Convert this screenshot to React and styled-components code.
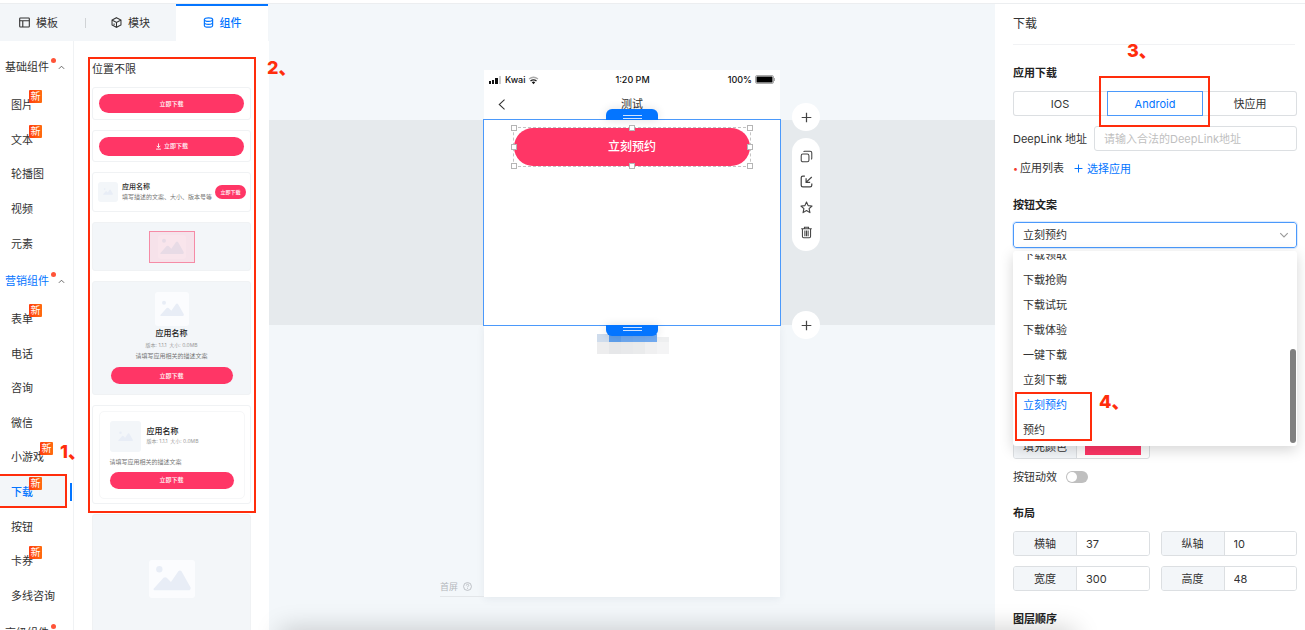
import React from "react";
import styled, { createGlobalStyle, css } from "styled-components";

const blue = "#0475ff";
const pink = "#ff3666";
const red = "#ff2d0c";
const mist = "#f3f6f9";

const Global = createGlobalStyle`
  *, *::before, *::after { box-sizing: border-box; }
  body {
    margin: 0;
    background: #fff;
    color: #333;
    font: 11px/16px Inter, "Noto Sans CJK SC", sans-serif;
  }
  button, input, select { font: inherit; color: inherit; margin: 0; }
  button { padding: 0; border: 0; background: none; }
  ul { list-style: none; margin: 0; padding: 0; }
  h2, h3 { margin: 0; font-size: 11px; line-height: 16px; }
`;

const Page = styled.div`
  display: grid;
  grid-template-columns: 269px minmax(0, 1fr) 310px;
  height: 100vh;
  min-height: 600px;
  padding-top: 4px;
  overflow: hidden;
  position: relative;
  &::before {
    content: "";
    position: absolute;
    inset: 3px 0 auto;
    height: 1px;
    background: #eceef0;
  }
`;

/* Soft shadow rising from below the fold */
const BottomShadow = styled.div`
  position: absolute;
  z-index: 3;
  top: 100%;
  left: 280px;
  right: 230px;
  height: 20px;
  box-shadow: 0 0 26px rgba(0, 0, 0, 0.22);
  pointer-events: none;
`;

/* Callouts */
const Callout = styled.div`
  position: absolute;
  z-index: 5;
  border: 2px solid ${red};
  pointer-events: none;
`;
const CalloutNumber = styled.span`
  position: absolute;
  color: ${red};
  font-size: 18px;
  line-height: 20px;
  font-weight: 800;
  white-space: nowrap;
`;
const NavCallout = styled(Callout)`
  inset: 0 6px 0 -2px;
  ${CalloutNumber} { left: 60px; top: -34px; }
`;
const CardsCallout = styled(Callout)`
  inset: 16px 13px auto 14px;
  height: 456px;
  ${CalloutNumber} { left: 177px; top: -1px; }
`;
const TabCallout = styled(Callout)`
  inset: -16px -8px -12px -9px;
  ${CalloutNumber} { left: 26px; top: -37px; }
`;
const OptionCallout = styled(Callout)`
  left: 2px;
  bottom: 5px;
  width: 77px;
  height: 49px;
  ${CalloutNumber} { left: 82px; top: -2px; }
`;

/* Left panel */
const Left = styled.aside`
  display: flex;
  flex-direction: column;
  min-height: 0;
  position: relative;
  z-index: 2;
`;
const Tabs = styled.div`
  display: grid;
  grid-template-columns: 77px 99px 92px;
  height: 37px;
  flex: none;
  background: ${mist};
`;
const Tab = styled.button`
  display: flex;
  align-items: center;
  justify-content: center;
  gap: 6px;
  position: relative;
  padding: 0 0 2px ${(p) => (p.$divided ? 8 : 0)}px;
  border-top: 2px solid transparent;
  svg { width: 11px; height: 11px; }
  ${(p) => p.$divided && css`
    &::before {
      content: "";
      position: absolute;
      left: 8px;
      top: 12px;
      height: 10px;
      border-left: 1px solid #d0d3d6;
    }
  `}
  ${(p) => p.$active && css`
    color: ${blue};
    font-weight: 500;
    background: #fff;
    border-color: ${blue};
  `}
`;
const LeftBody = styled.div`
  display: grid;
  grid-template-columns: 74px minmax(0, 1fr);
  flex: 1;
  min-height: 0;
  background: #fff;
`;
const Nav = styled.nav`
  border-right: 1px solid #f0f2f4;
  padding-top: 6px;
  height: 589px;
`;
const GroupHead = styled.button`
  display: flex;
  align-items: center;
  width: 100%;
  height: 40px;
  padding-left: 5px;
  color: ${(p) => (p.$active ? blue : "#333")};
  svg { width: 7px; height: 7px; color: #555; margin-left: 2px; }
`;
const Dot = styled.i`
  width: 5px;
  height: 5px;
  border-radius: 50%;
  background: #ff5438;
  align-self: flex-start;
  margin: 11px 0 0 2px;
`;
const NavList = styled.ul`
  display: grid;
  grid-auto-rows: 1fr;
  height: ${(p) => p.$height}px;
  margin-bottom: 1px;
`;
const NavItem = styled.li`
  display: flex;
  position: relative;
  ${(p) => p.$active && css`
    &::before {
      content: "";
      position: absolute;
      inset: 2px 6px 2px 0;
      background: ${mist};
    }
    &::after {
      content: "";
      position: absolute;
      right: 1px;
      top: 9px;
      height: 18px;
      border-left: 2px solid ${blue};
    }
  `}
`;
const NavLink = styled.a`
  display: flex;
  align-items: center;
  position: relative;
  padding: 2px 0 0 11px;
  text-decoration: none;
  color: ${(p) => (p.$active ? blue : "#333")};
  font-weight: ${(p) => (p.$active ? 500 : 400)};
`;
const Badge = styled.span`
  position: absolute;
  left: calc(100% - 4px);
  top: 3px;
  width: 13px;
  height: 13px;
  border-radius: 1px;
  background: linear-gradient(90deg, #ff3d0e, #ff6d10);
  color: #fff;
  font-size: 10px;
  line-height: 13px;
  font-weight: 400;
  text-align: center;
`;

/* Component cards */
const Cards = styled.section`
  display: flex;
  flex-direction: column;
  gap: 10px;
  min-height: 0;
  padding: 20px 18px 0;
  position: relative;
  h3 { font-weight: 400; height: 16px; }
`;
const Card = styled.div`
  flex: none;
  display: flex;
  align-items: center;
  justify-content: center;
  height: ${(p) => p.$height}px;
  border: 1px solid #f0f2f4;
  border-radius: 3px;
  background: ${(p) => (p.$filled ? mist : "#fff")};
`;
const Stack = styled.div`
  display: flex;
  flex-direction: column;
  align-items: ${(p) => (p.$start ? "flex-start" : "center")};
`;
const Pill = styled.button`
  display: flex;
  align-items: center;
  justify-content: center;
  gap: 2px;
  flex: none;
  width: ${(p) => p.$width || 145}px;
  height: ${(p) => p.$height || 19}px;
  border-radius: 10px;
  background: ${pink};
  color: #fff;
  font-size: ${(p) => (p.$small ? 5 : 6)}px;
  line-height: 8px;
  font-weight: 500;
  svg { width: 7px; height: 7px; }
`;
const AppName = styled.b`
  font-size: ${(p) => (p.$small ? 7 : 8)}px;
  line-height: 10px;
  font-weight: 500;
  color: #222;
`;
const Note = styled.span`
  font-size: ${(p) => (p.$pale ? 5 : 6)}px;
  line-height: 10px;
  white-space: nowrap;
  color: ${(p) => (p.$pale ? "#999" : "#777")};
`;
const Thumb = styled.span`
  display: flex;
  align-items: center;
  justify-content: center;
  flex: none;
  width: ${(p) => p.$w}px;
  height: ${(p) => p.$h || p.$w}px;
  border-radius: 3px;
  background: ${(p) => p.$fill || "#fbfcfe"};
  svg { width: ${(p) => p.$icon}px; }
`;
const PinkFrame = styled.span`
  display: flex;
  align-items: center;
  justify-content: center;
  width: 46px;
  height: 32px;
  border: 1px solid #f58ba6;
  background: #f6e2ea;
`;
const ListCard = styled(Card)`
  justify-content: flex-start;
  gap: 4px;
  padding: 0 5px;
  ${Pill} { margin-left: -1px; }
`;
const AppCard = styled(Stack)`
  ${AppName} { margin: 2px 0 1px; }
  ${Note} { margin-top: 1px; }
  ${Pill} { margin-top: 6px; }
`;
const InnerCard = styled(Stack)`
  width: 146px;
  height: 88px;
  padding: 9px 10px;
  border: 1px solid #f6f7f8;
  border-radius: 5px;
  > ${Note} { margin-top: 5px; }
  > ${Pill} { margin-top: 5px; }
`;
const InnerHead = styled.div`
  display: flex;
  align-items: center;
  gap: 6px;
`;

/* Canvas */
const Canvas = styled.main`
  display: flex;
  flex-direction: column;
  padding-top: 66px;
  background: #f3f7fa;
  min-height: 0;
`;
const PhoneTop = styled.header`
  width: 296px;
  margin: 0 auto;
  background: #fff;
`;
const StatusBar = styled.div`
  display: grid;
  grid-template-columns: 1fr auto 1fr;
  align-items: center;
  height: 20px;
  padding: 0 4px 0 5px;
  font-size: 9px;
  font-weight: 500;
  color: #111;
`;
const StatusSide = styled.span`
  display: flex;
  align-items: center;
  gap: 3px;
  justify-content: ${(p) => (p.$end ? "flex-end" : "flex-start")};
`;
const TitleBar = styled.div`
  display: grid;
  grid-template-columns: 22px 1fr 22px;
  align-items: center;
  height: 30px;
  padding: 0 7px 2px;
  text-align: center;
  svg { width: 13px; height: 13px; display: block; margin-left: 5px; }
`;
const Band = styled.section`
  background: #e6eaed;
`;
const Stage = styled.div`
  width: 296px;
  height: 205px;
  margin: 0 auto;
  padding: 8px 30px;
  position: relative;
  z-index: 1;
  background: #fff;
  outline: 1px solid #4b99fb;
`;
const Grip = styled.button`
  display: flex;
  flex-direction: column;
  align-items: center;
  justify-content: center;
  gap: 2px;
  position: absolute;
  left: 122px;
  width: 52px;
  height: 11px;
  background: ${blue};
  box-shadow: 0 0 10px rgba(0, 0, 0, 0.12);
  ${(p) => (p.$bottom
    ? css`top: 100%; padding-bottom: 4px; border-radius: 0 0 6px 6px;`
    : css`bottom: 100%; padding-top: 4px; border-radius: 6px 6px 0 0;`)}
  &::before, &::after { content: ""; flex: none; width: 19px; height: 1px; background: #cfe3ff; }
`;
const Selected = styled.div`
  position: relative;
  width: 236px;
  height: 38px;
  outline: 1px dashed #c4c4c4;
`;
const MainButton = styled.button`
  width: 100%;
  height: 100%;
  border-radius: 19px;
  background: ${pink};
  color: #fff;
  font-size: 12px;
  font-weight: 500;
`;
const Handle = styled.i`
  position: absolute;
  left: ${(p) => p.$x}%;
  top: ${(p) => p.$y}%;
  width: 6px;
  height: 6px;
  margin: -3px;
  border: 1px solid #b5b5b5;
  background: #fff;
`;
const Rail = styled.div`
  display: flex;
  flex-direction: column;
  gap: 7px;
  position: absolute;
  left: calc(100% + 12px);
  top: -17px;
  bottom: -14px;
`;
const RoundButton = styled.button`
  display: grid;
  place-items: center;
  width: 28px;
  height: 28px;
  border-radius: 50%;
  background: #fff;
  color: #444;
  svg { width: 11px; height: 11px; }
  &:last-child { margin-top: auto; }
`;
const ToolPill = styled.div`
  display: flex;
  flex-direction: column;
  justify-content: space-between;
  align-items: center;
  width: 28px;
  height: 113px;
  padding: 12px 0;
  border-radius: 14px;
  background: #fff;
  color: #444;
`;
const ToolButton = styled.button`
  svg { display: block; width: 13px; height: 13px; }
`;
const PhoneBottom = styled.div`
  width: 296px;
  height: 272px;
  margin: 0 auto;
  position: relative;
  background: #fff;
  box-shadow: 0 2px 8px rgba(40, 60, 80, 0.07);
`;
const Mosaic = styled.svg`
  position: absolute;
  left: 113px;
  top: 9px;
  width: 72px;
  height: 20px;
`;
const FirstScreen = styled.div`
  display: flex;
  align-items: flex-start;
  gap: 5px;
  position: absolute;
  right: 100%;
  bottom: 0;
  width: 44px;
  height: 19px;
  border-bottom: 1px solid #e3e6e9;
  color: #b4b8bc;
  font-size: 9px;
  line-height: 18px;
  svg { width: 9px; height: 9px; margin-top: 4px; }
`;

/* Settings */
const Settings = styled.aside`
  padding: 0 8px 0 18px;
  position: relative;
  background: #fff;
  min-height: 0;
`;
const PanelTitle = styled.h2`
  height: 41px;
  padding-top: 12px;
  margin-right: 2px;
  border-bottom: 1px solid #f1f2f4;
  font-size: 12px;
  font-weight: 400;
`;
const SectionTitle = styled.h3`
  padding-top: ${(p) => p.$space}px;
  font-weight: 600;
  color: #222;
`;
const Segments = styled.div`
  display: grid;
  grid-template-columns: 94px 96px 1fr;
  height: 25px;
  margin-top: 10px;
  border-radius: 3px;
  box-shadow: inset 0 0 0 1px #dcdfe2;
`;
const Segment = styled.button`
  position: relative;
  ${(p) => p.$active && css`
    color: ${blue};
    border: 1px solid #4b99fb;
  `}
`;
const FieldRow = styled.div`
  display: flex;
  align-items: center;
  gap: 7px;
  margin-top: 10px;
`;
const TextInput = styled.input`
  flex: 1;
  min-width: 0;
  height: 25px;
  padding: 0 9px;
  border: 1px solid #dcdfe2;
  border-radius: 3px;
  outline: 0;
  &::placeholder { color: #bfbfbf; opacity: 1; }
`;
const AppRow = styled.div`
  display: flex;
  align-items: center;
  gap: 10px;
  margin-top: 9px;
`;
const Required = styled.span`
  &::before { content: "•"; color: #f43b2f; margin-right: 2px; font-size: 9px; }
`;
const AddButton = styled.button`
  display: flex;
  align-items: center;
  gap: 4px;
  color: ${blue};
  svg { width: 9px; height: 9px; }
`;
const Picker = styled.div`
  position: relative;
  margin-top: 9px;
  > svg {
    position: absolute;
    right: 8px;
    top: 8px;
    width: 10px;
    height: 10px;
    color: #999;
    pointer-events: none;
  }
`;
const Select = styled.select`
  display: block;
  appearance: none;
  width: 100%;
  height: 26px;
  padding: 0 9px;
  border: 1px solid #4b99fb;
  border-radius: 3px;
  background: #fff;
  outline: 1px solid #dcebff;
`;
const Menu = styled.div`
  position: absolute;
  z-index: 3;
  inset: 29px 0 auto;
  height: 195px;
  border-radius: 3px;
  background: #fff;
  box-shadow: 0 4px 14px rgba(0, 0, 0, 0.17);
`;
const Options = styled.ul`
  display: flex;
  flex-direction: column;
  justify-content: flex-end;
  height: 100%;
  padding: 0 0 3px;
  overflow: hidden;
  clip-path: inset(3px 0 0);
`;
const Option = styled.li`
  flex: none;
  height: 25px;
  padding-left: 10px;
  line-height: 25px;
  color: ${(p) => (p.$active ? blue : "#333")};
`;
const Scrollbar = styled.i`
  position: absolute;
  right: 1px;
  bottom: 3px;
  width: 6px;
  height: 94px;
  border-radius: 3px;
  background: #808080;
`;
const Fields = styled.div`
  display: grid;
  grid-template-columns: 1fr 1fr;
  gap: 10px 11px;
  margin-top: ${(p) => p.$space}px;
`;
const Field = styled.label`
  display: grid;
  grid-template-columns: 63px minmax(0, 1fr);
  height: 25px;
  border: 1px solid #dcdfe2;
  border-radius: 3px;
  overflow: hidden;
`;
const FieldName = styled.span`
  display: grid;
  place-items: center;
  border-right: 1px solid #dcdfe2;
  background: ${mist};
`;
const FieldInput = styled.input`
  min-width: 0;
  width: 100%;
  padding: 0 9px;
  border: 0;
  outline: 0;
  background: #fff;
`;
const ColorInput = styled.input`
  width: 56px;
  height: 17px;
  margin: 3px 8px;
  padding: 0;
  border: 0;
  background: none;
  &::-webkit-color-swatch-wrapper { padding: 0; }
  &::-webkit-color-swatch { border: 0; }
`;
const SwitchRow = styled.label`
  display: flex;
  align-items: center;
  gap: 9px;
  margin-top: 10px;
`;
const Switch = styled.input`
  appearance: none;
  display: flex;
  align-items: center;
  width: 22px;
  height: 12px;
  padding: 1px;
  border-radius: 6px;
  background: #bfbfbf;
  &::before { content: ""; width: 10px; height: 10px; border-radius: 50%; background: #fff; }
`;

const Icon = ({ children, box = 16, width = 1.3 }) => (
  <svg viewBox={`0 0 ${box} ${box}`} fill="none" stroke="currentColor" strokeWidth={width} aria-hidden="true">
    {children}
  </svg>
);
const LayoutIcon = () => <Icon width={1.6}><rect x="1" y="1.5" width="14" height="13" rx="1" /><path d="M1 5.5h14M5.5 5.5v9" /></Icon>;
const CubeIcon = () => <Icon width={1.5}><path d="M8 1l6.5 3.3v7.4L8 15l-6.5-3.3V4.3zM1.5 4.3L8 8l6.5-3.7M8 8v7M4.5 9.5v2" /></Icon>;
const StackIcon = () => <Icon width={1.7}><ellipse cx="8" cy="3.8" rx="6" ry="2.6" /><path d="M2 3.8v8.4c0 3.5 12 3.5 12 0V3.8M2 8c0 3.5 12 3.5 12 0" /></Icon>;
const ChevronUp = () => <Icon width={2}><path d="M2 11l6-6 6 6" /></Icon>;
const ChevronDown = () => <Icon width={1.8}><path d="M2 5l6 6 6-6" /></Icon>;
const PlusIcon = () => <Icon width={1.8}><path d="M8 1v14M1 8h14" /></Icon>;
const BackIcon = () => <Icon><path d="M10.5 2L4 8l6.5 6" /></Icon>;
const DownloadIcon = () => <Icon width={2}><path d="M8 1v9M4 6.5L8 10.5l4-4M2.5 14h11" /></Icon>;
const CopyIcon = () => <Icon><rect x="1.5" y="5" width="9.5" height="9.5" rx="2" /><path d="M4.5 2.3q.3-.8 1.200-.8h6.800q2 0 2 2v6.800q0 .9-.8 1.200" /></Icon>;
const ImportIcon = () => <Icon width={1.5}><path d="M6 1.500H3.500q-2 0-2 2v9q0 2 2 2h9q2 0 2-2V10.500M14.500 2.500L8 8.500M7.500 4v5h5" /></Icon>;
const StarIcon = () => <Icon width={1.4}><path strokeLinejoin="round" d="M8 1.300l2 4.400 4.800.5-3.600 3.200 1 4.900L8 11.800l-4.200 2.500 1-4.900L1.200 6.200 6 5.700z" /></Icon>;
const TrashIcon = () => <Icon width={1.3}><path d="M1.500 3.500h13M5.500 3V1.500h5V3M3 3.500v9.500q0 1.500 1.500 1.500h7q1.500 0 1.500-1.500V3.500M6 5.500v7M8 5.500v7M10 5.500v7" /></Icon>;
const HelpIcon = () => <Icon width={1.5}><circle cx="8" cy="8" r="7" /><path d="M5.800 6.300c0-3 4.400-3 4.400-.3C10.200 7.500 8 7.500 8 9.500M8 11v1.500" /></Icon>;
const PictureIcon = ({ tone = "#e8edf6" }) => (
  <svg viewBox="0 0 36 26" fill={tone} aria-hidden="true">
    <circle cx="6" cy="4" r="3" />
    <path d="M1 24q-1-1 0-2l9-10q1.500-1 3 0l4 4 7-10q1.500-1.500 3 0l8.500 15q.8 2-1 3z" />
  </svg>
);
const SignalIcon = () => (
  <svg width="13" height="8" viewBox="0 0 13 8" fill="#111" aria-hidden="true">
    <rect y="5" width="2" height="3" /><rect x="3" y="4" width="2" height="4" /><rect x="6" y="2" width="3" height="6" />
    <rect x="10" width="2" height="8" fill="#ccc" />
  </svg>
);
const WifiIcon = () => (
  <svg width="11" height="9" viewBox="0 0 11 9" fill="none" aria-hidden="true">
    <path d="M1 3q4.500-3.500 9 0" stroke="#aaa" strokeWidth="1.300" />
    <path d="M2.500 5q3-2.300 6 0" stroke="#222" strokeWidth="1.400" />
    <path d="M3.800 6.200q1.700-1.200 3.400 0L5.500 8.200z" fill="#111" />
  </svg>
);
const BatteryIcon = () => (
  <svg width="21" height="10" viewBox="0 0 21 10" aria-hidden="true">
    <rect x=".5" y=".5" width="18" height="8" rx="1.500" fill="#fff" stroke="#aaa" />
    <rect x="1.500" y="1.500" width="16" height="6" rx=".5" fill="#000" />
    <path d="M19.500 3v3" stroke="#aaa" />
  </svg>
);

const basicItems = [["图片", true], ["文本", true], ["轮播图"], ["视频"], ["元素"]];
const marketingItems = [
  ["表单", true], ["电话"], ["咨询"], ["微信"], ["小游戏", true],
  ["下载", true], ["按钮"], ["卡券", true], ["多线咨询"],
];
const options = ["下载领取", "下载抢购", "下载试玩", "下载体验", "一键下载", "立刻下载", "立刻预约", "预约"];
const handles = [[0, 0], [50, 0], [100, 0], [0, 50], [100, 50], [0, 100], [50, 100], [100, 100]];
const mosaicTop = ["#cfdcec", "#5f9feb", "#6ea8ef", "#70aaf0", "#72abf1", "#79aff2"];
const mosaicBottom = ["#ededee", "#e6e7e9", "#e8e9eb", "#eaebec", "#f0f0f1", "#f4f4f5"];

function NavGroup({ title, items, height, current }) {
  const active = items.some(([name]) => name === current);
  return (
    <>
      <GroupHead $active={active}>{title}<Dot /><ChevronUp /></GroupHead>
      {items.length > 0 && (
        <NavList $height={height}>
          {items.map(([name, isNew]) => (
            <NavItem key={name} $active={name === current}>
              <NavLink href="#" $active={name === current}>{name}{isNew && <Badge>新</Badge>}</NavLink>
              {name === current && <NavCallout><CalloutNumber>1、</CalloutNumber></NavCallout>}
            </NavItem>
          ))}
        </NavList>
      )}
    </>
  );
}

function NumberField({ name, value }) {
  return <Field><FieldName>{name}</FieldName><FieldInput defaultValue={value} /></Field>;
}

export default function App() {
  return (
    <>
      <Global />
      <Page>
        <Left>
          <Tabs>
            <Tab><LayoutIcon />模板</Tab>
            <Tab $divided><CubeIcon />模块</Tab>
            <Tab $active><StackIcon />组件</Tab>
          </Tabs>
          <LeftBody>
            <Nav>
              <NavGroup title="基础组件" items={basicItems} height={173} current="下载" />
              <NavGroup title="营销组件" items={marketingItems} height={311} current="下载" />
              <NavGroup title="高级组件" items={[]} current="下载" />
            </Nav>
            <Cards>
              <h3>位置不限</h3>
              <Card $height={33}><Pill>立即下载</Pill></Card>
              <Card $height={32}><Pill><DownloadIcon />立即下载</Pill></Card>
              <ListCard $height={40}>
                <Thumb $w={20} $icon={10} $fill={mist}><PictureIcon /></Thumb>
                <Stack $start>
                  <AppName $small>应用名称</AppName>
                  <Note>填写描述的文案、大小、版本号等</Note>
                </Stack>
                <Pill $width={31} $height={14} $small>立即下载</Pill>
              </ListCard>
              <Card $height={49} $filled>
                <PinkFrame>
                  <Thumb $w={28} $h={24} $icon={24} $fill="#f9e5ec"><PictureIcon tone="#e8dbe6" /></Thumb>
                </PinkFrame>
              </Card>
              <Card $height={114} $filled>
                <AppCard>
                  <Thumb $w={34} $icon={24}><PictureIcon /></Thumb>
                  <AppName>应用名称</AppName>
                  <Note $pale>版本: 1.1.1&nbsp; 大小: 0.0MB</Note>
                  <Note>请填写应用相关的描述文案</Note>
                  <Pill $width={122} $height={17}>立即下载</Pill>
                </AppCard>
              </Card>
              <Card $height={99}>
                <InnerCard $start>
                  <InnerHead>
                    <Thumb $w={31} $icon={15} $fill={mist}><PictureIcon /></Thumb>
                    <Stack $start>
                      <AppName>应用名称</AppName>
                      <Note $pale>版本: 1.1.1&nbsp; 大小: 0.0MB</Note>
                    </Stack>
                  </InnerHead>
                  <Note>请填写应用相关的描述文案</Note>
                  <Pill $width={124} $height={17}>立即下载</Pill>
                </InnerCard>
              </Card>
              <Card $height={129} $filled><Thumb $w={46} $h={38} $icon={38}><PictureIcon /></Thumb></Card>
              <CardsCallout><CalloutNumber>2、</CalloutNumber></CardsCallout>
            </Cards>
          </LeftBody>
        </Left>

        <Canvas>
          <PhoneTop>
            <StatusBar>
              <StatusSide><SignalIcon />Kwai<WifiIcon /></StatusSide>
              <span>1:20 PM</span>
              <StatusSide $end>100%<BatteryIcon /></StatusSide>
            </StatusBar>
            <TitleBar><BackIcon /><span>测试</span></TitleBar>
          </PhoneTop>
          <Band>
            <Stage>
              <Grip aria-label="调整上边缘" />
              <Selected>
                <MainButton>立刻预约</MainButton>
                {handles.map(([x, y]) => <Handle key={`${x}-${y}`} $x={x} $y={y} />)}
              </Selected>
              <Grip $bottom aria-label="调整下边缘" />
              <Rail>
                <RoundButton aria-label="在上方添加"><PlusIcon /></RoundButton>
                <ToolPill>
                  <ToolButton aria-label="复制"><CopyIcon /></ToolButton>
                  <ToolButton aria-label="导入"><ImportIcon /></ToolButton>
                  <ToolButton aria-label="收藏"><StarIcon /></ToolButton>
                  <ToolButton aria-label="删除"><TrashIcon /></ToolButton>
                </ToolPill>
                <RoundButton aria-label="在下方添加"><PlusIcon /></RoundButton>
              </Rail>
            </Stage>
          </Band>
          <PhoneBottom>
            <Mosaic viewBox="0 0 72 20" shapeRendering="crispEdges" aria-hidden="true">
              {mosaicTop.slice(0, 5).map((fill, i) => <rect key={fill} x={i * 12} width="12" height="8" fill={fill} />)}
              <rect x="60" y="3" width="12" height="5" fill="#eeeff0" />
              {mosaicBottom.map((fill, i) => <rect key={fill} x={i * 12} y="8" width="12" height="12" fill={fill} />)}
            </Mosaic>
            <FirstScreen>首屏<HelpIcon /></FirstScreen>
          </PhoneBottom>
        </Canvas>

        <Settings>
          <PanelTitle>下载</PanelTitle>
          <SectionTitle $space={20}>应用下载</SectionTitle>
          <Segments>
            <Segment>IOS</Segment>
            <Segment $active>Android<TabCallout><CalloutNumber>3、</CalloutNumber></TabCallout></Segment>
            <Segment>快应用</Segment>
          </Segments>
          <FieldRow>
            <label htmlFor="deeplink">DeepLink 地址</label>
            <TextInput id="deeplink" placeholder="请输入合法的DeepLink地址" />
          </FieldRow>
          <AppRow><Required>应用列表</Required><AddButton><PlusIcon />选择应用</AddButton></AppRow>
          <SectionTitle $space={20}>按钮文案</SectionTitle>
          <Picker>
            <Select aria-label="按钮文案" defaultValue="立刻预约">
              {options.map((o) => <option key={o}>{o}</option>)}
            </Select>
            <ChevronDown />
            <Menu>
              <Options role="listbox">
                {options.map((o) => (
                  <Option key={o} role="option" aria-selected={o === "立刻预约"} $active={o === "立刻预约"}>{o}</Option>
                ))}
              </Options>
              <Scrollbar />
              <OptionCallout><CalloutNumber>4、</CalloutNumber></OptionCallout>
            </Menu>
          </Picker>
          <Fields $space={186}>
            <Field><FieldName>填充颜色</FieldName><ColorInput type="color" defaultValue="#ff3666" /></Field>
          </Fields>
          <SwitchRow>按钮动效<Switch type="checkbox" role="switch" /></SwitchRow>
          <SectionTitle $space={20}>布局</SectionTitle>
          <Fields $space={10}>
            <NumberField name="横轴" value="37" />
            <NumberField name="纵轴" value="10" />
            <NumberField name="宽度" value="300" />
            <NumberField name="高度" value="48" />
          </Fields>
          <SectionTitle $space={20}>图层顺序</SectionTitle>
        </Settings>
        <BottomShadow />
      </Page>
    </>
  );
}
